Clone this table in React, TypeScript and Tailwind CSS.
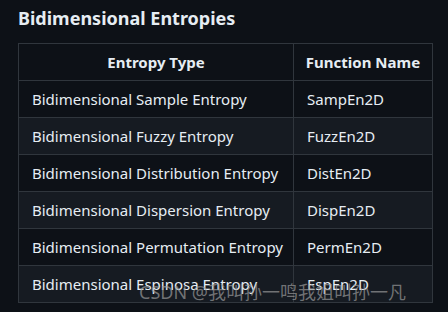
import React from 'react';

const rows = [
  { type: 'Bidimensional Sample Entropy', fn: 'SampEn2D' },
  { type: 'Bidimensional Fuzzy Entropy', fn: 'FuzzEn2D' },
  { type: 'Bidimensional Distribution Entropy', fn: 'DistEn2D' },
  { type: 'Bidimensional Dispersion Entropy', fn: 'DispEn2D' },
  { type: 'Bidimensional Permutation Entropy', fn: 'PermEn2D' },
  { type: 'Bidimensional Espinosa Entropy', fn: 'EspEn2D' },
];

const App = () => {
  return (
    <div className="relative w-[448px] h-[312px] overflow-hidden bg-[#0d1117] text-[#e6edf3] font-['Noto_Sans',sans-serif]">
      {/* Heading */}
      <h2 className="pl-[18px] pt-[4px] text-[18px] font-bold leading-[28px]">Bidimensional Entropies</h2>

      {/* Table */}
      <table className="ml-[18px] mt-[11px] w-[414px] table-fixed border-collapse text-[15px]">
        <colgroup>
          <col className="w-[275px]" />
          <col className="w-[139px]" />
        </colgroup>
        <thead>
          <tr className="h-[37px]">
            <th className="border border-[#30363d] px-[13px] font-bold text-center whitespace-nowrap">Entropy Type</th>
            <th className="border border-[#30363d] px-[10px] font-bold text-center whitespace-nowrap">Function Name</th>
          </tr>
        </thead>
        <tbody>
          {rows.map((r, i) => (
            <tr key={r.fn} className={i % 2 === 1 ? 'h-[37px] bg-[#161b22]' : 'h-[37px] bg-[#0d1117]'}>
              <td className="border border-[#30363d] px-[13px] whitespace-nowrap">{r.type}</td>
              <td className="border border-[#30363d] px-[13px] whitespace-nowrap">{r.fn}</td>
            </tr>
          ))}
        </tbody>
      </table>

      {/* Watermark */}
      <div className="absolute left-[139px] top-[281px] text-[18px] leading-[22px] text-[#9a9a9a]/70 whitespace-nowrap font-['Noto_Sans','Noto_Sans_CJK_SC',sans-serif]">
        CSDN @我叫孙一鸣我姐叫孙一凡
      </div>
    </div>
  );
};

export default App;
